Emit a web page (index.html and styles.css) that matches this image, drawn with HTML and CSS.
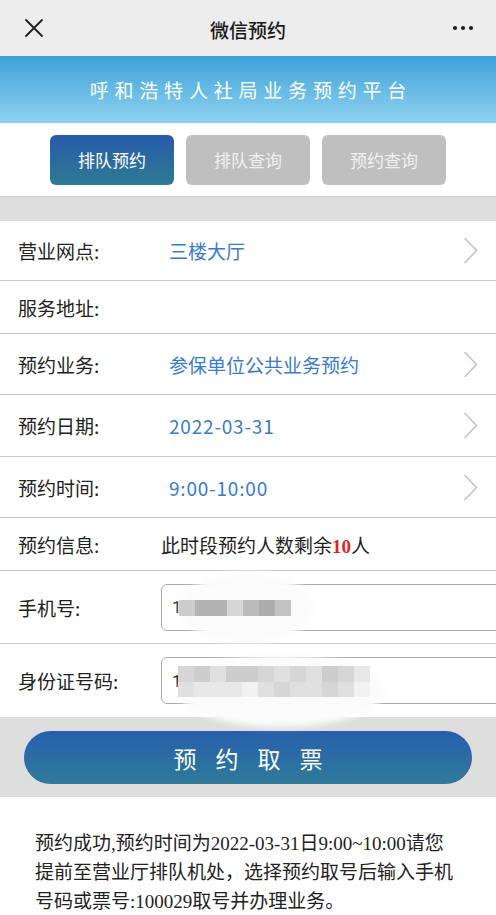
FILE: index.html
```html
<!DOCTYPE html>
<html lang="zh">
<head>
<meta charset="utf-8">
<title>微信预约</title>
<link rel="stylesheet" href="styles.css">
</head>
<body>
<div class="page">
  <header class="nav">
    <div class="nav-left">
      <svg class="icon-close" width="20" height="20" viewBox="0 0 20 20"><path d="M2 2 L18 18 M18 2 L2 18" stroke="#1e1e1e" stroke-width="1.8" fill="none" stroke-linecap="round"/></svg>
    </div>
    <div class="nav-title">微信预约</div>
    <div class="nav-right">
      <svg width="22" height="6" viewBox="0 0 22 6"><circle cx="3" cy="3" r="2.1" fill="#1e1e1e"/><circle cx="11" cy="3" r="2.1" fill="#1e1e1e"/><circle cx="19" cy="3" r="2.1" fill="#1e1e1e"/></svg>
    </div>
  </header>

  <div class="banner">呼和浩特人社局业务预约平台</div>

  <nav class="tabs">
    <div class="tab active">排队预约</div>
    <div class="tab">排队查询</div>
    <div class="tab">预约查询</div>
  </nav>

  <div class="band"></div>

  <section class="form">
    <div class="row r-first">
      <div class="label">营业网点:</div>
      <div class="value">三楼大厅</div>
      <svg class="chev" viewBox="0 0 15 27"><path d="M1.5 1 L13.5 13.5 L1.5 26" stroke="#c4c4c4" stroke-width="1.6" fill="none"/></svg>
    </div>
    <div class="row r-short">
      <div class="label">服务地址:</div>
    </div>
    <div class="row r-tall">
      <div class="label">预约业务:</div>
      <div class="value">参保单位公共业务预约</div>
      <svg class="chev" viewBox="0 0 15 27"><path d="M1.5 1 L13.5 13.5 L1.5 26" stroke="#c4c4c4" stroke-width="1.6" fill="none"/></svg>
    </div>
    <div class="row r-tall2">
      <div class="label">预约日期:</div>
      <div class="value num">2022-03-31</div>
      <svg class="chev" viewBox="0 0 15 27"><path d="M1.5 1 L13.5 13.5 L1.5 26" stroke="#c4c4c4" stroke-width="1.6" fill="none"/></svg>
    </div>
    <div class="row r-tall">
      <div class="label">预约时间:</div>
      <div class="value num">9:00-10:00</div>
      <svg class="chev" viewBox="0 0 15 27"><path d="M1.5 1 L13.5 13.5 L1.5 26" stroke="#c4c4c4" stroke-width="1.6" fill="none"/></svg>
    </div>
    <div class="row r-short">
      <div class="label">预约信息:</div>
      <div class="info">此时段预约人数剩余<b class="count">10</b>人</div>
    </div>
    <div class="row r-input">
      <div class="label">手机号:</div>
      <div class="field">1</div>
      <div class="smudge smudge-a"></div>
      <div class="pix pix-a">
        <i class="g3"></i><i class="g6"></i><i class="g6"></i><i class="g2"></i><i class="g5"></i><i class="g7"></i><i class="g4"></i>
      </div>
    </div>
    <div class="row r-input r-last">
      <div class="label">身份证号码:</div>
      <div class="field">1</div>
      <div class="smudge smudge-b"></div>
      <div class="pix pix-b">
        <i class="g2"></i><i class="g3"></i><i class="g1"></i><i class="g3"></i><i class="g3"></i><i class="g2"></i><i class="g1"></i><i class="g2"></i><i class="g1"></i><i class="g3"></i><i class="g2"></i><i class="g0"></i>
        <i class="g1"></i><i class="g0"></i><i class="g0"></i><i class="g0"></i><i class="gw"></i><i class="g1"></i><i class="g2"></i><i class="g1"></i><i class="g1"></i><i class="g2"></i><i class="g1"></i><i class="gw"></i>
      </div>
    </div>
  </section>

  <div class="action">
    <button class="submit">预约取票</button>
  </div>

  <p class="notice">预约成功,预约时间为2022-03-31日9:00~10:00请您提前至营业厅排队机处，选择预约取号后输入手机号码或票号:100029取号并办理业务。</p>
</div>
</body>
</html>
```

FILE: styles.css
```css
* { box-sizing: border-box; }
html, body { margin: 0; padding: 0; }
body {
  width: 496px;
  overflow: hidden;
  background: #fff;
  font-family: "Noto Sans CJK SC", "Noto Sans", sans-serif;
  color: #222;
}
.page { width: 496px; overflow: hidden; }

.nav {
  height: 56px;
  background: #ededed;
  display: grid;
  grid-template-columns: 1fr auto 1fr;
  align-items: center;
}
.nav-left { padding-left: 24px; display: flex; align-items: center; }
.nav-right { display: flex; justify-content: flex-end; padding-right: 22px; align-items: center; }
.nav-title { font-size: 19px; font-weight: 500; color: #1a1a1a; margin-top: 2px; }

.banner {
  height: 67px;
  background: linear-gradient(#3ea2da, #8fd2ef);
  color: #fff;
  font-size: 19px;
  letter-spacing: 5.8px;
  padding-left: 5.8px;
  display: flex;
  align-items: center;
  justify-content: center;
}

.tabs {
  height: 73px;
  display: flex;
  justify-content: center;
  align-items: center;
  gap: 12px;
  background: #fff;
}
.tab {
  width: 124px;
  height: 50px;
  border-radius: 6px;
  background: #bfbfbf;
  color: #f2f2f2;
  font-size: 17px;
  display: flex;
  align-items: center;
  justify-content: center;
}
.tab.active {
  background: linear-gradient(#265aa9, #2f7b94);
  color: #fff;
}

.band {
  height: 25px;
  background: #dedede;
  border-top: 1px solid #c9c9c9;
}

.row {
  position: relative;
  display: flex;
  align-items: center;
  padding-left: 18px;
  border-bottom: 1px solid #c9c9c9;
  background: #fff;
  font-size: 19px;
}
.r-first { height: 60px; }
.r-short { height: 53px; }
.r-tall { height: 61px; }
.r-tall2 { height: 62px; }
.r-input { height: 73px; }
.r-last { border-bottom: none; }

.label { width: 143px; flex: none; color: #222; }
.value { flex: 1; padding-left: 8px; color: #3a7bcc; }
.value.num { letter-spacing: 0.8px; }
.info { flex: 1; color: #1e1e1e; }
.count {
  font-family: "Liberation Serif", serif;
  font-weight: bold;
  color: #e0261f;
}
.chev { width: 15px; height: 27px; margin-right: 18px; flex: none; }

.field {
  flex: none;
  width: 345px;
  height: 47px;
  border: 1px solid #a9a9a9;
  border-radius: 6px;
  padding-left: 10px;
  display: flex;
  align-items: center;
  font-family: "Roboto", sans-serif;
  font-size: 17px;
  color: #222;
  background: #fff;
}

.smudge {
  position: absolute;
  background: #fbfbfb;
  border-radius: 50%;
  filter: blur(3px);
}
.smudge-a { left: 180px; top: 2px; width: 134px; height: 70px; }
.smudge-b { left: 178px; top: 11px; width: 206px; height: 72px; z-index: 2; }

.pix {
  position: absolute;
  display: grid;
  grid-template-columns: repeat(var(--cols), 16px);
  grid-auto-rows: 16px;
  z-index: 3;
}
.pix i { display: block; }
.pix-a { --cols: 7; left: 179px; top: 29px; }
.pix-b { --cols: 12; left: 178px; top: 22px; grid-auto-rows: 15.5px; }
.gw { background: #f2f2f2; }
.g0 { background: #e8e8e8; }
.g1 { background: #e0e0e0; }
.g2 { background: #d6d6d6; }
.g3 { background: #cdcdcd; }
.g4 { background: #c2c2c2; }
.g5 { background: #bababa; }
.g6 { background: #b3b3b3; }
.g7 { background: #acacac; }

.action {
  height: 80px;
  background: #dedede;
  display: flex;
  align-items: center;
  justify-content: center;
}
.submit {
  width: 448px;
  height: 53px;
  border: none;
  border-radius: 27px;
  background: linear-gradient(#285ead, #2e7b9a);
  color: #fff;
  font-family: "Noto Sans CJK SC", sans-serif;
  font-size: 23px;
  letter-spacing: 19px;
  padding: 0 0 0 19px;
  margin-top: 1px;
}

.notice {
  margin: 0;
  padding: 32px 39px 0 35px;
  font-family: "Liberation Serif", "Noto Sans CJK SC", serif;
  font-size: 19px;
  line-height: 29px;
  color: #222;
}
```
